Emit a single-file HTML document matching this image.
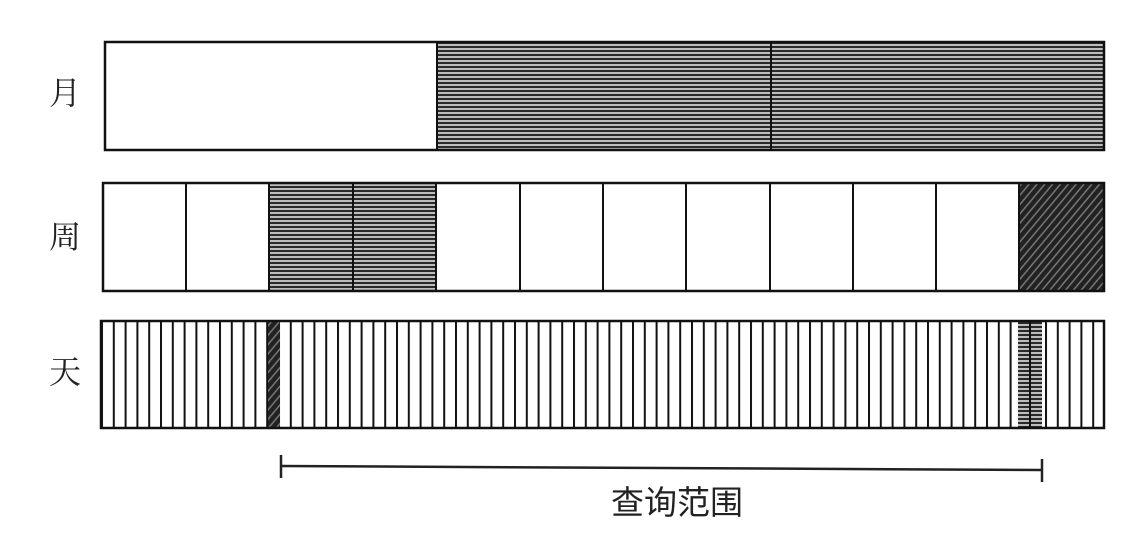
<!DOCTYPE html>
<html><head><meta charset="utf-8"><style>
html,body{margin:0;padding:0;background:#fff;}
svg{display:block}
</style></head><body>
<svg width="1128" height="542" viewBox="0 0 1128 542" xmlns="http://www.w3.org/2000/svg">
<defs>
<pattern id="hs" width="8" height="4" patternUnits="userSpaceOnUse">
<rect width="8" height="4" fill="#bdbdbd"/>
<rect y="2" width="8" height="2" fill="#2a2a2a"/>
</pattern>
<pattern id="dg" width="6" height="6" patternUnits="userSpaceOnUse" patternTransform="rotate(40)">
<rect width="6" height="6" fill="#222"/>
<rect width="1.5" height="6" fill="#777"/>
</pattern>
<pattern id="vd" x="101" width="11.8" height="10" patternUnits="userSpaceOnUse">
<rect x="0" width="2" height="10" fill="#111"/>
</pattern>
</defs>
<g font-family="'Liberation Serif','Noto Serif CJK SC',serif" font-size="32" fill="#222">
<text x="49" y="104">月</text>
<text x="49" y="248">周</text>
<text x="49" y="383">天</text>
</g>
<rect x="437" y="42" width="667" height="108" fill="url(#hs)"/>
<rect x="105" y="42" width="999" height="108" fill="none" stroke="#111" stroke-width="2.5"/>
<line x1="437" y1="42" x2="437" y2="150" stroke="#111" stroke-width="2"/>
<line x1="771" y1="42" x2="771" y2="150" stroke="#111" stroke-width="2"/>
<rect x="269" y="183" width="167" height="108" fill="url(#hs)"/>
<rect x="1019" y="183" width="85" height="108" fill="url(#dg)"/>
<rect x="103" y="183" width="1001" height="108" fill="none" stroke="#111" stroke-width="2.5"/>
<g stroke="#111" stroke-width="2">
<line x1="186" y1="183" x2="186" y2="291"/><line x1="269" y1="183" x2="269" y2="291"/>
<line x1="353" y1="183" x2="353" y2="291"/><line x1="436" y1="183" x2="436" y2="291"/>
<line x1="520" y1="183" x2="520" y2="291"/><line x1="603" y1="183" x2="603" y2="291"/>
<line x1="686" y1="183" x2="686" y2="291"/><line x1="770" y1="183" x2="770" y2="291"/>
<line x1="853" y1="183" x2="853" y2="291"/><line x1="936" y1="183" x2="936" y2="291"/>
<line x1="1019" y1="183" x2="1019" y2="291"/>
</g>
<rect x="101" y="321" width="1003" height="107" fill="url(#vd)"/>
<rect x="268" y="321" width="12" height="107" fill="url(#dg)"/>
<rect x="1018" y="321" width="24" height="107" fill="url(#hs)"/>
<line x1="1030" y1="321" x2="1030" y2="428" stroke="#111" stroke-width="2"/>
<rect x="101" y="321" width="1003" height="107" fill="none" stroke="#111" stroke-width="2.5"/>
<g stroke="#222" stroke-width="2.5">
<line x1="281" y1="466" x2="1042" y2="470"/>
<line x1="281" y1="455" x2="281" y2="478"/>
<line x1="1042" y1="459" x2="1042" y2="482"/>
</g>
<text x="611" y="514" font-family="'Liberation Sans','Noto Sans CJK SC',sans-serif" font-size="33" fill="#222">查询范围</text>
</svg>
</body></html>
